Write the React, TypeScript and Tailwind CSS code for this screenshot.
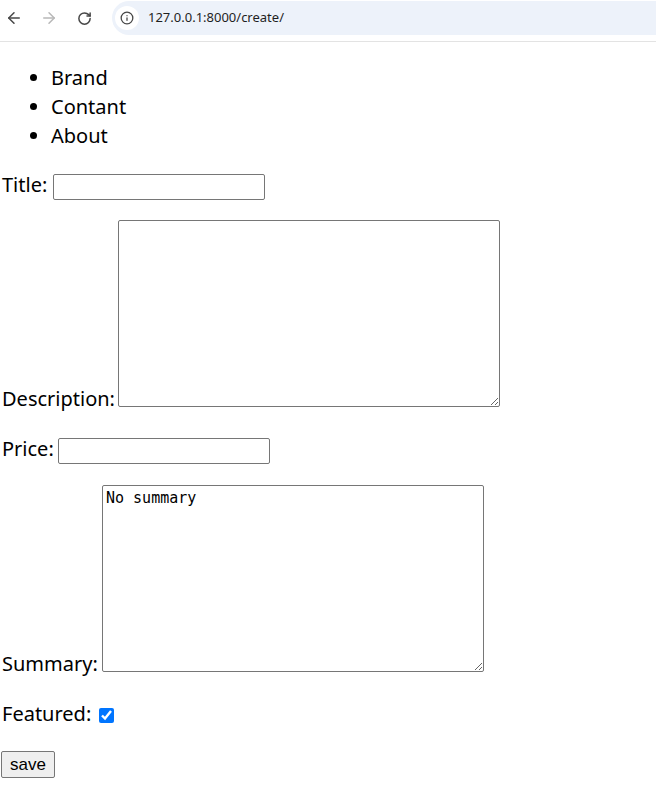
import React from "react";
import { ArrowLeft, ArrowRight, RotateCw, Info } from "lucide-react";

const body = { fontFamily: '"Noto Sans", "Open Sans", sans-serif' };

function Toolbar() {
  return (
    <div className="flex h-[42px] items-start border-b border-[#e3e3e3] bg-white">
      <div className="flex h-[36px] items-center">
        <div className="flex h-[28px] w-[27px] items-center justify-center text-[#474747]">
          <ArrowLeft size={18} strokeWidth={2} />
        </div>
        <div className="ml-[8px] flex h-[28px] w-[27px] items-center justify-center text-[#b8b8b8]">
          <ArrowRight size={18} strokeWidth={2} />
        </div>
        <div className="ml-[9px] flex h-[28px] w-[27px] items-center justify-center text-[#474747]">
          <RotateCw size={15} strokeWidth={2.4} />
        </div>
      </div>
      <div className="ml-[14px] mt-[1px] flex h-[34px] flex-1 items-center rounded-l-full bg-[#edf2fa]">
        <div className="ml-[3px] flex h-[24px] w-[24px] items-center justify-center rounded-full bg-white text-[#474747]">
          <Info size={14} strokeWidth={2.2} />
        </div>
        <span className="ml-[9px] text-[13px] text-[#1f1f1f]" style={body}>
          127.0.0.1:8000/create/
        </span>
      </div>
    </div>
  );
}

export default function App() {
  return (
    <div className="min-h-[807px] w-[656px] bg-white text-black" style={body}>
      <Toolbar />
      <div className="flex flex-col items-start text-[20px]">
        <ul className="mt-[21px] list-disc pl-[51px] leading-[29px]">
          <li>Brand</li>
          <li>Contant</li>
          <li>About</li>
        </ul>

        <div className="mt-[19px] flex items-end">
          <label className="w-[53px] whitespace-nowrap pl-[2px] leading-[31px]">Title:</label>
          <input
            type="text"
            className="h-[26px] w-[212px] rounded-[2px] border border-[#767676] bg-white"
          />
        </div>

        <div className="mt-[20px] flex items-end">
          <label className="mb-[-2px] w-[118px] whitespace-nowrap pl-[2px] leading-[20px]">Description:</label>
          <textarea className="h-[187px] w-[382px] resize rounded-[2px] border border-[#767676] bg-white" />
        </div>

        <div className="mt-[26px] flex items-end">
          <label className="w-[58px] whitespace-nowrap pl-[2px] leading-[31px]">Price:</label>
          <input
            type="text"
            className="h-[26px] w-[212px] rounded-[2px] border border-[#767676] bg-white"
          />
        </div>

        <div className="mt-[21px] flex items-end">
          <label className="mb-[-2px] w-[102px] whitespace-nowrap pl-[2px] leading-[20px]">Summary:</label>
          <textarea
            defaultValue="No summary"
            className="h-[187px] w-[382px] resize rounded-[2px] border border-[#767676] bg-white px-[3px] py-[3px] text-[15px] leading-[18px] text-black"
            style={{ fontFamily: '"DejaVu Sans Mono", "Liberation Mono", monospace' }}
          />
        </div>

        <div className="mt-[27px] flex h-[29px] items-center">
          <label className="w-[99px] whitespace-nowrap pl-[2px] leading-[29px]">Featured:</label>
          <input type="checkbox" defaultChecked className="mt-[4px] h-[15px] w-[15px] accent-[#0075ff]" />
        </div>

        <button
          className="ml-[1px] mt-[23px] h-[27px] w-[54px] rounded-[2px] border border-[#767676] bg-[#efefef] text-[17px] leading-none text-black"
          style={{ fontFamily: '"Liberation Sans", Arial, sans-serif' }}
        >
          save
        </button>
      </div>
    </div>
  );
}
